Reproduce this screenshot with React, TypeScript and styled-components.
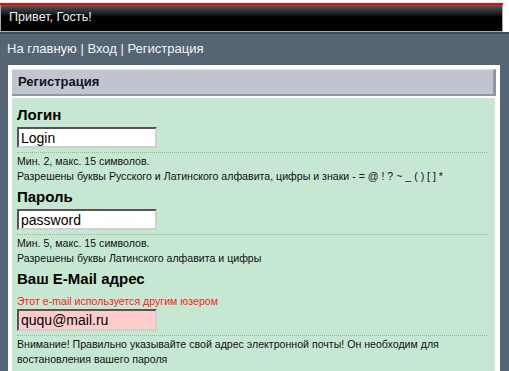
import * as React from "react";
import styled, { createGlobalStyle } from "styled-components";

const Global = createGlobalStyle`
  html, body {
    margin: 0;
    padding: 0;
    background: #fff;
    font-family: "Liberation Sans", Arial, sans-serif;
  }
`;

const Top = styled.div`
  width: 503px;
  padding-top: 3px;
`;

const RedLine = styled.div`
  height: 2px;
  background: #ff0000;
`;

const Header = styled.div`
  height: 26px;
  border: 1px solid #a8a8a8;
  border-top: 0;
  background: linear-gradient(#5a5a5a 0px, #1a1a1a 9px, #000 12px, #000);
  color: #f0f0f0;
  font-size: 12.6px;
  line-height: 25px;
  padding-left: 8px;
`;

const Main = styled.div`
  background: #566574;
  border-top: 2px solid #404b57;
`;

const Nav = styled.div`
  color: #f2f4f6;
  font-size: 13px;
  padding: 7px 7px 0 7px;
  height: 24px;
`;

const Panel = styled.div`
  margin: 0 9px 0 8px;
  background: #fff;
  padding: 4px 4px 0 4px;
`;

const PanelTitle = styled.div`
  height: 24px;
  background: #c0c6d0;
  border-top: 1px solid #dfe2e7;
  border-right: 3px solid #9098a5;
  border-bottom: 2px solid #9098a5;
  color: #101820;
  font-size: 13px;
  font-weight: bold;
  line-height: 24px;
  padding-left: 6px;
`;

const Body = styled.div`
  margin-top: 2px;
  margin-right: 1px;
  background: #c6e8d3;
  padding: 6px 5px 4px 5px;
`;

const Label = styled.div`
  font-size: 15px;
  font-weight: bold;
  color: #000;
  height: 22px;
  line-height: 22px;
`;

const Input = styled.input<{ $error?: boolean }>`
  box-sizing: border-box;
  width: 140px;
  height: ${(p) => (p.$error ? "22px" : "21px")};
  margin: 1px 0 0 0;
  padding: 0 2px;
  border: 2px solid;
  border-color: #555 #d0d0d0 #d0d0d0 #555;
  background: ${(p) => (p.$error ? "#ffcccc" : "#fff")};
  font-family: "Liberation Sans", Arial, sans-serif;
  font-size: 14px;
  color: #000;
  display: block;
`;

const Hint = styled.div`
  margin-top: 4px;
  border-top: 1px dotted #9fb38f;
  padding-top: 1px;
  font-size: 10.6px;
  line-height: 15px;
  color: #111;
  margin-right: 3px;
`;

const Field = styled.div`
  margin-bottom: 2px;
`;

const Error = styled.div`
  color: #ff1a1a;
  font-size: 10.6px;
  line-height: 14px;
  margin-top: 4px;
`;

export default function App() {
  return (
    <>
      <Global />
      <Top>
        <RedLine />
        <Header>Привет, Гость!</Header>
      </Top>
      <Main>
        <Nav>На главную | Вход | Регистрация</Nav>
        <Panel>
          <PanelTitle>Регистрация</PanelTitle>
          <Body>
            <Field>
              <Label>Логин</Label>
              <Input defaultValue="Login" />
              <Hint>
                Мин. 2, макс. 15 символов.
                <br />
                Разрешены буквы Русского и Латинского алфавита, цифры и знаки - = @ ! ? ~ _ ( ) [ ] *
              </Hint>
            </Field>
            <Field>
              <Label>Пароль</Label>
              <Input defaultValue="password" />
              <Hint>
                Мин. 5, макс. 15 символов.
                <br />
                Разрешены буквы Латинского алфавита и цифры
              </Hint>
            </Field>
            <Field>
              <Label>Ваш E-Mail адрес</Label>
              <Error>Этот e-mail используется другим юзером</Error>
              <Input $error defaultValue="ququ@mail.ru" />
              <Hint>
                Внимание! Правильно указывайте свой адрес электронной почты! Он необходим для
                <br />
                востановления вашего пароля
              </Hint>
            </Field>
          </Body>
        </Panel>
      </Main>
    </>
  );
}
